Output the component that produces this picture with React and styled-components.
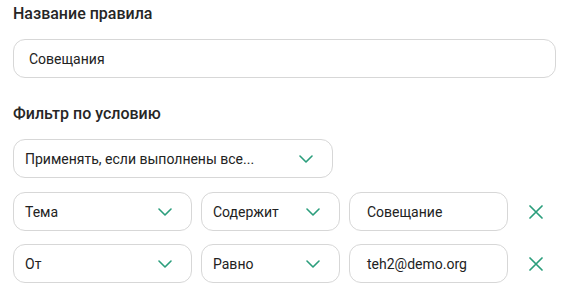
import React from 'react';
import styled, { createGlobalStyle } from 'styled-components';

const GlobalStyle = createGlobalStyle`
  html, body {
    margin: 0;
    padding: 0;
    background: #fff;
    font-family: Roboto, 'Liberation Sans', sans-serif;
    color: #222;
  }
`;

const ACCENT = '#2b9e7c';

const Form = styled.div`
  width: 543px;
  padding: 4px 0 0 13px;
  display: flex;
  flex-direction: column;
`;

const Label = styled.div`
  font-size: 16px;
  line-height: 20px;
  font-weight: 500;
  color: #262626;
  margin-bottom: 15px;
`;

const Field = styled.div`
  box-sizing: border-box;
  height: ${(p) => p.$height || 39}px;
  width: ${(p) => (p.$width ? `${p.$width}px` : '100%')};
  flex-shrink: 0;
  border: 1px solid #d7d7d7;
  border-radius: 12px;
  display: flex;
  align-items: center;
  justify-content: space-between;
  padding: 0 ${(p) => p.$pr || 16}px 0 ${(p) => p.$pl || 16}px;
  font-size: 14px;
  color: #222;
  background: #fff;
  margin-bottom: ${(p) => p.$mb || 0}px;
`;

const Rows = styled.div`
  display: flex;
  flex-direction: column;
  gap: 13px;
`;

const Row = styled.div`
  display: flex;
  align-items: center;
  gap: 9px;
`;

const Remove = styled.button`
  border: none;
  background: none;
  padding: 0;
  margin-left: 12px;
  width: 14px;
  height: 14px;
  display: flex;
  align-items: center;
  justify-content: center;
  cursor: pointer;
`;

const Chevron = () => (
  <svg width="14" height="8" viewBox="0 0 14 8" fill="none">
    <path d="M1 1l6 6 6-6" stroke={ACCENT} strokeWidth="1.6" strokeLinecap="round" strokeLinejoin="round" />
  </svg>
);

const Cross = () => (
  <svg width="14" height="14" viewBox="0 0 14 14" fill="none">
    <path d="M1 1l12 12M13 1L1 13" stroke={ACCENT} strokeWidth="1.7" strokeLinecap="round" />
  </svg>
);

const Select = ({ width, children, mb }) => (
  <Field $width={width} $pl={11} $pr={19} $mb={mb}>
    <span>{children}</span>
    <Chevron />
  </Field>
);

const conditions = [
  { field: 'Тема', op: 'Содержит', value: 'Совещание' },
  { field: 'От', op: 'Равно', value: 'teh2@demo.org' },
];

export default function App() {
  return (
    <>
      <GlobalStyle />
      <Form>
        <Label>Название правила</Label>
        <Field $pl={15} $mb={26}>Совещания</Field>
        <Label>Фильтр по условию</Label>
        <Select width={320} mb={14}>Применять, если выполнены все...</Select>
        <Rows>
          {conditions.map((c) => (
            <Row key={c.field}>
              <Select width={179}>{c.field}</Select>
              <Select width={139}>{c.op}</Select>
              <Field $width={159} $pl={17}>{c.value}</Field>
              <Remove aria-label="Удалить"><Cross /></Remove>
            </Row>
          ))}
        </Rows>
      </Form>
    </>
  );
}
